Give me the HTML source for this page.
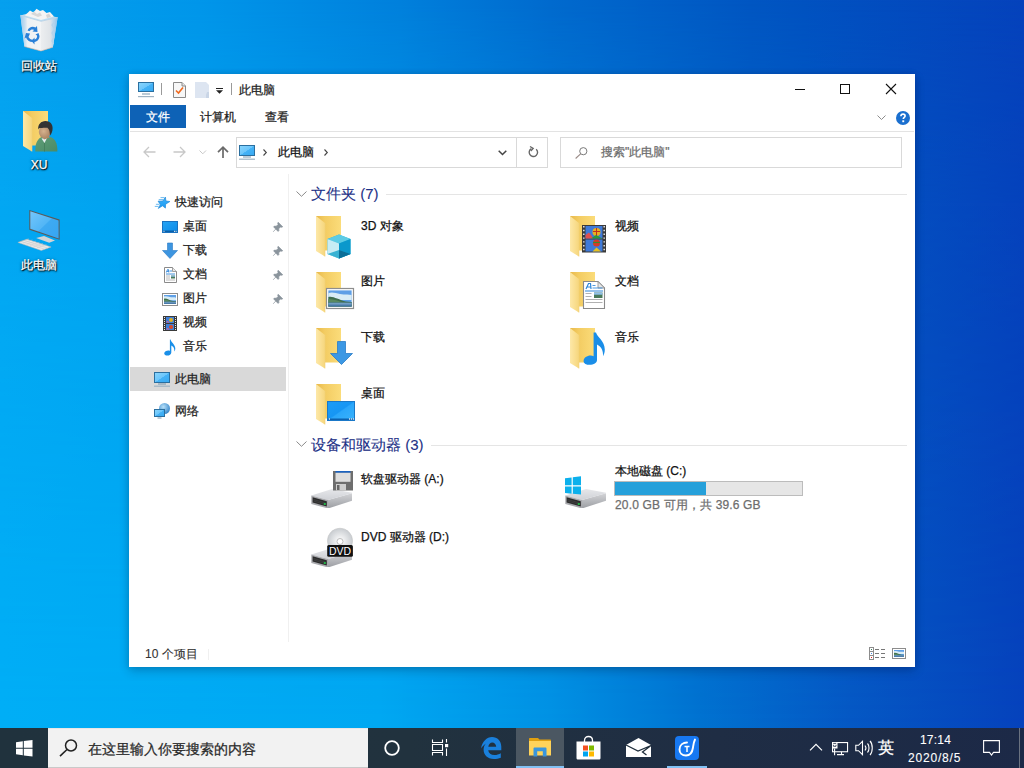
<!DOCTYPE html>
<html><head><meta charset="utf-8">
<style>
*{box-sizing:border-box;margin:0;padding:0}
html,body{width:1024px;height:768px;overflow:hidden}
body{position:relative;font-family:"Liberation Sans",sans-serif;font-size:12px;line-height:16px;color:#000;
background:linear-gradient(90deg,#06a0ee 0px,#0096ea 200px,#0080dc 400px,#006ace 550px,#0056c2 750px,#0542bc 1024px);}
.a{position:absolute}
.t{position:absolute;white-space:nowrap;font-size:12px;line-height:16px;margin-top:-1px;-webkit-text-stroke:0.25px currentColor}
svg{position:absolute;overflow:visible}
#bgl{position:absolute;left:0;top:0;width:1024px;height:728px;
background:linear-gradient(90deg,#00aef6 0px,#00a8f2 380px,#0092e4 550px,#0072d0 700px,#0458c4 850px,#0542bc 1024px);
-webkit-mask-image:linear-gradient(to bottom,transparent 0%,rgba(0,0,0,.5) 28%,#000 100%);mask-image:linear-gradient(to bottom,transparent 0%,rgba(0,0,0,.5) 28%,#000 100%)}
.dt{position:absolute;color:#fff;text-align:center;width:76px;-webkit-text-stroke:0.25px #fff;text-shadow:1px 1px 1px #000,0 1px 2px rgba(0,0,0,.8),0 0 3px rgba(0,0,0,.5)}
#win{position:absolute;left:129px;top:74px;width:786px;height:593px;background:#fff;
box-shadow:0 0 6px rgba(0,0,30,.12),0 4px 10px rgba(0,0,30,.2);}
#tb{position:absolute;left:0;top:728px;width:1024px;height:40px;
background:linear-gradient(90deg,#20323d 0%,#21323e 40%,#1f2d44 70%,#1c2947 100%)}
</style></head><body>
<div id="bgl"></div>

<!-- desktop icons -->

<!-- recycle bin -->
<svg style="left:16px;top:6px" width="46" height="48" viewBox="0 0 46 48">
 <defs>
  <linearGradient id="binL" x1="0" y1="0" x2="1" y2="0"><stop offset="0" stop-color="#9ccbee"/><stop offset="0.22" stop-color="#c8def0"/><stop offset="0.35" stop-color="#eef1f4"/><stop offset="1" stop-color="#f3f4f5"/></linearGradient>
  <linearGradient id="binR" x1="0" y1="0" x2="1" y2="0"><stop offset="0" stop-color="#eceef0"/><stop offset="0.55" stop-color="#e0e4e8"/><stop offset="0.75" stop-color="#b8d6ee"/><stop offset="1" stop-color="#8cc4ee"/></linearGradient>
 </defs>
 <path d="M4.4 9.4L18.8 5.6L41.6 11.5L36.9 41.25L25 45L8.4 40.6Z" fill="#cfe3f2" opacity="0.9"/>
 <path d="M4.4 9.4L25 15.3V45L8.4 40.6Z" fill="url(#binL)"/>
 <path d="M25 15.3L41.6 11.5L36.9 41.25L25 45Z" fill="url(#binR)"/>
 <path d="M9 9.5L14 4.5L17.5 6.5L20.5 2.8L24 5L27 4L30.5 7L34 6L38 10.5L25 14Z" fill="#f4f4f4"/>
 <path d="M15 8L18 5.5L21 8L24 6.5L26 9.5L22 11Z" fill="#d8d8d8"/>
 <path d="M30 9L33 7.5L35 11L31 12Z" fill="#d4d4d4"/>
 <path d="M4.4 9.4L25 15.3L41.6 11.5" fill="none" stroke="#bcd4e6" stroke-width="0.9"/>
 <path d="M38.5 16L36 19L38.5 23L36 27L38 31L36 35L37.5 38" fill="none" stroke="#b4d2ea" stroke-width="1.2"/>
 <path d="M11.5 24.5C13 21 16.5 20 19.5 21.5L21 20L21.5 26L16.5 25.5L18 24C16.5 23.2 14.5 23.6 13.5 25.2Z" fill="#2a80d8"/>
 <path d="M10 27L14 27.5L12.5 31C13.5 33 15.5 34 17.5 33.5V36C14 36.5 11 34.5 10 31.5L8.5 32.5Z" fill="#2a80d8"/>
 <path d="M19.5 28.5L22.5 27L23.5 30C23.5 33 21.5 35.5 18.5 36V38.5L15.5 35L18.5 31.5V33.5C20.5 33 21.5 31 21 29.5Z" fill="#2a80d8"/>
 <path d="M8.4 40.6L25 45L36.9 41.25" fill="none" stroke="#c8a898" stroke-width="0.8" opacity="0.7"/>
</svg>

<!-- XU user folder -->
<svg style="left:19px;top:107px" width="48" height="48"><use href="#folder"/></svg>
<svg style="left:34px;top:120px" width="25" height="34" viewBox="0 0 25 34">
 <defs><radialGradient id="face" cx="0.4" cy="0.45" r="0.65"><stop offset="0" stop-color="#d6b28e"/><stop offset="1" stop-color="#a88060"/></radialGradient>
 <linearGradient id="shirt" x1="0" y1="0" x2="1" y2="1"><stop offset="0" stop-color="#5f9e78"/><stop offset="1" stop-color="#4a8a66"/></linearGradient></defs>
 <path d="M1.3 31.6C1 25 2.5 20 7 17.3L10 16.5L16.5 17C21 18.5 23.6 23 23.4 31.6Z" fill="url(#shirt)"/>
 <path d="M7.5 18.5L10.5 23L13 18Z" fill="#e6eef0"/>
 <path d="M10.5 23V31.6" stroke="#3f7858" stroke-width="0.7"/>
 <path d="M8 16L10 19.5L15.5 17.5L14.5 14Z" fill="#b08868"/>
 <ellipse cx="10.8" cy="11.8" rx="6" ry="6.6" fill="url(#face)"/>
 <path d="M4.2 9.5C3.8 4.5 7 1 11.5 1C16 1 18.8 4 18.6 8.5C18.5 11.5 17.5 14 16 15.5C15.8 12.5 15.5 9.5 13.5 7.8C11.5 7.5 7 7.8 5 8.2C4.6 8.7 4.4 9.1 4.2 9.5Z" fill="#333"/>
</svg>

<!-- This PC -->
<svg style="left:14px;top:204px" width="50" height="50" viewBox="0 0 50 50">
 <defs><linearGradient id="pcs" x1="0" y1="0" x2="1" y2="1"><stop offset="0" stop-color="#74c6fb"/><stop offset="0.5" stop-color="#52b6f6"/><stop offset="0.52" stop-color="#3eaaf2"/><stop offset="1" stop-color="#36a6f2"/></linearGradient></defs>
 <path d="M22.1 33.9L30 31.9L41 36.5L35.2 38.7Z" fill="#d2d4d6"/>
 <path d="M15.3 5.9L45.6 15.6V35.8L15.3 25.7Z" fill="#5a5a5a"/>
 <path d="M16.3 7.3L44.6 16.4V34.4L16.3 24.8Z" fill="url(#pcs)"/>
 <path d="M3.9 38.4L13 35.2L37.1 43L27.3 46.5Z" fill="#e8e8e8" stroke="#b4b4b4" stroke-width="0.5"/>
 <path d="M7 37.5L30.5 45.2M10 36.4L33.5 44M5.5 38L15 34.8M9 39.1L18.5 35.9M12.5 40.3L22 37M16 41.4L25.5 38.2M19.5 42.6L29 39.4M23 43.7L32.5 40.5" stroke="#c4c4c4" stroke-width="0.45"/>
</svg>
<div class="dt" style="left:1px;top:58px">回收站</div>
<div class="dt" style="left:1px;top:157px">XU</div>
<div class="dt" style="left:1px;top:257px">此电脑</div>

<!-- window -->
<div id="win">

<!-- title bar -->
<svg style="left:9px;top:8px" width="16" height="17" viewBox="0 0 16 17">
 <defs><linearGradient id="scr" x1="0" y1="0" x2="1" y2="1"><stop offset="0" stop-color="#8ad6fd"/><stop offset="0.5" stop-color="#6cc6fb"/><stop offset="0.52" stop-color="#44b2f6"/><stop offset="1" stop-color="#38aaf2"/></linearGradient></defs>
 <rect x="0.5" y="0.5" width="15" height="9" fill="url(#scr)" stroke="#2b6f9f"/>
 <rect x="4" y="11.5" width="8" height="1" fill="#7a98ad"/>
 <rect x="0" y="14" width="16" height="1.2" fill="#9fb3c3"/>
</svg>
<div class="a" style="left:32px;top:9px;width:1px;height:12px;background:#9a9a9a"></div>
<svg style="left:44px;top:8px" width="13" height="16" viewBox="0 0 13 16">
 <path d="M0.5 0.5H9L12.5 4V15.5H0.5Z" fill="#f7f7f7" stroke="#8a8a8a"/>
 <path d="M9 0.5V4H12.5" fill="#e8e8e8" stroke="#8a8a8a"/>
 <path d="M3 8.5L5.5 11L10 5.5" fill="none" stroke="#f0691e" stroke-width="1.6"/>
</svg>
<svg style="left:66px;top:8px" width="14" height="16" viewBox="0 0 14 16">
 <path d="M0 0H11L14 3V16H0Z" fill="#dde5f1"/>
 <path d="M12 10H14V16H11V13" fill="#c9d5e6"/>
</svg>
<svg style="left:87px;top:14px" width="7" height="6" viewBox="0 0 7 6">
 <rect x="0" y="0" width="7" height="1" fill="#222"/>
 <path d="M0 2.2H7L3.5 5.8Z" fill="#222"/>
</svg>
<div class="a" style="left:102px;top:9px;width:1px;height:12px;background:#9a9a9a"></div>
<div class="t" style="left:110px;top:9px;color:#222">此电脑</div>
<div class="a" style="left:666px;top:15px;width:10px;height:1px;background:#111"></div>
<div class="a" style="left:711px;top:10px;width:10px;height:10px;border:1px solid #111"></div>
<svg style="left:757px;top:10px" width="10" height="10" viewBox="0 0 10 10"><path d="M0 0L10 10M10 0L0 10" stroke="#111" stroke-width="1.1"/></svg>

<!-- ribbon -->
<div class="a" style="left:1px;top:31px;width:56px;height:23px;background:#0e62b6"></div>
<div class="t" style="left:17px;top:36px;color:#fff">文件</div>
<div class="t" style="left:71px;top:36px;color:#222">计算机</div>
<div class="t" style="left:136px;top:36px;color:#222">查看</div>
<div class="a" style="left:1px;top:57px;width:784px;height:1px;background:#e3e3e3"></div>
<svg style="left:748px;top:41px" width="9" height="6" viewBox="0 0 9 6"><path d="M0.5 0.5L4.5 4.5L8.5 0.5" fill="none" stroke="#8c8c8c" stroke-width="1"/></svg>
<svg style="left:767px;top:37px" width="14" height="14" viewBox="0 0 14 14">
 <circle cx="7" cy="7" r="7" fill="#1a6fcf"/>
 <path d="M4.9 5.2C4.9 3.9 5.8 3.1 7 3.1C8.3 3.1 9.1 3.9 9.1 5C9.1 6.4 7.3 6.5 7.3 8.1" fill="none" stroke="#fff" stroke-width="1.6"/>
 <rect x="6.3" y="9.3" width="1.9" height="1.9" fill="#fff"/>
</svg>

<!-- nav buttons -->
<svg style="left:14px;top:72px" width="13" height="12" viewBox="0 0 13 12"><path d="M12.5 6H1M6 1L1 6L6 11" fill="none" stroke="#c8c8c8" stroke-width="1.3"/></svg>
<svg style="left:44px;top:72px" width="13" height="12" viewBox="0 0 13 12"><path d="M0.5 6H12M7 1L12 6L7 11" fill="none" stroke="#c8c8c8" stroke-width="1.3"/></svg>
<svg style="left:70px;top:76px" width="8" height="5" viewBox="0 0 8 5"><path d="M0.5 0.5L3.8 3.8L7 0.5" fill="none" stroke="#c8c8c8" stroke-width="1"/></svg>
<svg style="left:88px;top:72px" width="12" height="12" viewBox="0 0 12 12"><path d="M6 12V1.2M1 6.2L6 1.2L11 6.2" fill="none" stroke="#6a6a6a" stroke-width="1.7"/></svg>

<!-- address box -->
<div class="a" style="left:107px;top:63px;width:312px;height:31px;border:1px solid #d9d9d9"></div>
<div class="a" style="left:387px;top:63px;width:1px;height:31px;background:#d9d9d9"></div>
<svg style="left:110px;top:71px" width="16" height="15" viewBox="0 0 16 15">
 <rect x="0.5" y="0.5" width="15" height="10" fill="url(#scr)" stroke="#2b6f9f"/>
 <rect x="4" y="11.5" width="8" height="1" fill="#7a98ad"/>
 <rect x="0" y="13.6" width="16" height="1.2" fill="#9fb3c3"/>
</svg>
<svg style="left:134px;top:75px" width="4" height="7" viewBox="0 0 4 7"><path d="M0.5 0.5L3.3 3.5L0.5 6.5" fill="none" stroke="#444" stroke-width="1.1"/></svg>
<div class="t" style="left:149px;top:71px;color:#111">此电脑</div>
<svg style="left:195px;top:75px" width="4" height="7" viewBox="0 0 4 7"><path d="M0.5 0.5L3.3 3.5L0.5 6.5" fill="none" stroke="#444" stroke-width="1.1"/></svg>
<svg style="left:369px;top:76px" width="9" height="6" viewBox="0 0 9 6"><path d="M0.7 0.7L4.5 4.5L8.3 0.7" fill="none" stroke="#444" stroke-width="1.5"/></svg>
<svg style="left:399px;top:72px" width="11" height="12" viewBox="0 0 11 12"><path d="M8.2 3.2A4.2 4.2 0 1 1 3.4 2.6" fill="none" stroke="#666" stroke-width="1.4"/><path d="M2 0.5L5.2 2.4L2.8 5" fill="none" stroke="#666" stroke-width="1.3"/></svg>

<!-- search box -->
<div class="a" style="left:431px;top:63px;width:342px;height:31px;border:1px solid #d9d9d9"></div>
<svg style="left:446px;top:73px" width="13" height="12" viewBox="0 0 13 12"><circle cx="8.3" cy="4.2" r="3.6" fill="none" stroke="#7a7a7a" stroke-width="1"/><path d="M5.6 6.8L0.6 11.5" stroke="#9a8a86" stroke-width="1.1"/></svg>
<div class="t" style="left:472px;top:71px;color:#6d6d6d">搜索"此电脑"</div>

<!-- nav pane -->

<svg style="left:26px;top:123px" width="16" height="12" viewBox="0 0 16 12">
 <defs><linearGradient id="star" x1="0" y1="0" x2="0" y2="1"><stop offset="0" stop-color="#3fb2fa"/><stop offset="1" stop-color="#1a9af2"/></linearGradient></defs>
 <path d="M10.4 0.1L10.9 4L14.9 4.5L10.6 7.2L10.4 11.1L7.5 8.8L3.3 11.4L5.4 7.5L3.1 4.2L7.8 4Z" fill="url(#star)" stroke="#1f88d8" stroke-width="0.7" stroke-linejoin="round"/>
 <path d="M5.9 0.6H9M4.1 2.6H7.6M1.3 7.3H4.3M0.2 9.4H3.2" stroke="#5eb4ee" stroke-width="0.9" stroke-linecap="round"/>
</svg>
<div class="t" style="left:46px;top:121px;color:#222">快速访问</div>

<svg style="left:33px;top:147px" width="16" height="12" viewBox="0 0 16 12">
 <defs><linearGradient id="dsk" x1="0" y1="0" x2="1" y2="1"><stop offset="0" stop-color="#26a4f4"/><stop offset="1" stop-color="#0a8ae8"/></linearGradient></defs>
 <rect x="0.5" y="0.5" width="15" height="11" fill="url(#dsk)" stroke="#1a72c0"/>
 <rect x="1" y="9.5" width="14" height="1.5" fill="#0a5fa8"/>
 <rect x="1.5" y="9.8" width="1" height="1" fill="#fff"/><rect x="12" y="9.8" width="1" height="1" fill="#fff"/><rect x="13.6" y="9.8" width="1" height="1" fill="#fff"/>
</svg>
<div class="t" style="left:54px;top:145px;color:#222">桌面</div>

<svg style="left:33px;top:169px" width="16" height="16" viewBox="0 0 16 16">
 <path d="M5.5 0H10.5V7.5H15.5L8 15.5L0.5 7.5H5.5Z" fill="#3d95e0" stroke="#2a78c4" stroke-width="0.6"/>
</svg>
<div class="t" style="left:54px;top:169px;color:#222">下载</div>

<svg style="left:35px;top:193px" width="13" height="16" viewBox="0 0 13 16">
 <path d="M0.5 0.5H8.5L12.5 4.5V15.5H0.5Z" fill="#fff" stroke="#8a8a8a"/>
 <path d="M8.5 0.5V4.5H12.5" fill="#e8e8e8" stroke="#8a8a8a" stroke-width="0.8"/>
 <path d="M2.3 5.5L3.6 2.5H4.4L4.8 5.5M2.8 4.4H4.7" fill="none" stroke="#2f86d8" stroke-width="0.9"/>
 <path d="M5.5 4H8M2 7H11" stroke="#2f86d8" stroke-width="0.9"/>
 <path d="M2 9H6M2 11H6M2 13H11" stroke="#a8a8a8" stroke-width="0.8"/>
 <rect x="7" y="8.5" width="4" height="3" fill="#4a7a5a"/><rect x="7" y="8.5" width="4" height="1.2" fill="#8fc0e8"/>
</svg>
<div class="t" style="left:54px;top:193px;color:#222">文档</div>

<svg style="left:33px;top:219px" width="16" height="13" viewBox="0 0 16 13">
 <rect x="0.5" y="0.5" width="15" height="12" fill="#fff" stroke="#8c8c8c"/>
 <use href="#land" x="2" y="2" width="12" height="9"/>
</svg>
<div class="t" style="left:54px;top:217px;color:#222">图片</div>

<svg style="left:34px;top:242px" width="14" height="15" viewBox="0 0 14 15">
 <rect x="0" y="0" width="14" height="15" fill="#3a3a3a"/>
 <rect x="3" y="1" width="8" height="6" fill="#3f7fd8"/>
 <rect x="3" y="8" width="8" height="6" fill="#3f7fd8"/>
 <circle cx="8" cy="4" r="2" fill="#e0b020"/><circle cx="8" cy="11" r="2" fill="#d84828"/>
 <path d="M3 6L5 5L6 7Z M3 13L5 12L6 14Z" fill="#e85a8a"/>
 <path d="M1.5 1V14M12.5 1V14" stroke="#e8e8e8" stroke-width="1" stroke-dasharray="1 1"/>
</svg>
<div class="t" style="left:54px;top:241px;color:#222">视频</div>

<svg style="left:35px;top:265px" width="12" height="17" viewBox="0 0 12 17">
 <path d="M6.6 0.5C6.8 3 11.5 5.5 11.3 9.8C11.2 11.3 10.7 12 10.2 12.6C10.8 10 9.5 7.3 7.3 6.5V13.5C7.3 15.4 5.3 16.6 3.4 16.6C1.6 16.6 0.2 15.8 0.2 14.5C0.2 12.8 2.5 11.6 4.4 11.6C5 11.6 5.5 11.7 5.9 11.9V0.5Z" fill="#1a8fe8"/>
</svg>
<div class="t" style="left:54px;top:265px;color:#222">音乐</div>

<svg style="left:144px;top:148px" width="10" height="10" viewBox="0 0 10 10" class="pin"><path d="M5.2 0.3L9.7 4.8L8.8 5.3L7.6 4.9L5.7 6.8L5.9 8.6L5.1 9.4L0.6 4.9L1.4 4.1L3.2 4.3L5.1 2.4L4.7 1.2Z M2.9 6.9L0.2 9.8" fill="#8a949c" stroke="#8a949c" stroke-width="0.7"/></svg>
<svg style="left:144px;top:172px" width="10" height="10" viewBox="0 0 10 10"><path d="M5.2 0.3L9.7 4.8L8.8 5.3L7.6 4.9L5.7 6.8L5.9 8.6L5.1 9.4L0.6 4.9L1.4 4.1L3.2 4.3L5.1 2.4L4.7 1.2Z M2.9 6.9L0.2 9.8" fill="#8a949c" stroke="#8a949c" stroke-width="0.7"/></svg>
<svg style="left:144px;top:196px" width="10" height="10" viewBox="0 0 10 10"><path d="M5.2 0.3L9.7 4.8L8.8 5.3L7.6 4.9L5.7 6.8L5.9 8.6L5.1 9.4L0.6 4.9L1.4 4.1L3.2 4.3L5.1 2.4L4.7 1.2Z M2.9 6.9L0.2 9.8" fill="#8a949c" stroke="#8a949c" stroke-width="0.7"/></svg>
<svg style="left:144px;top:220px" width="10" height="10" viewBox="0 0 10 10"><path d="M5.2 0.3L9.7 4.8L8.8 5.3L7.6 4.9L5.7 6.8L5.9 8.6L5.1 9.4L0.6 4.9L1.4 4.1L3.2 4.3L5.1 2.4L4.7 1.2Z M2.9 6.9L0.2 9.8" fill="#8a949c" stroke="#8a949c" stroke-width="0.7"/></svg>

<div class="a" style="left:1px;top:293px;width:156px;height:24px;background:#d9d9d9"></div>
<svg style="left:25px;top:298px" width="16" height="15" viewBox="0 0 16 15">
 <rect x="0.5" y="0.5" width="15" height="10" fill="url(#scr)" stroke="#2b6f9f"/>
 <rect x="4" y="11.5" width="8" height="1" fill="#7a98ad"/>
 <rect x="0" y="13.6" width="16" height="1.2" fill="#9fb3c3"/>
</svg>
<div class="t" style="left:46px;top:298px;color:#222">此电脑</div>

<svg style="left:25px;top:329px" width="16" height="16" viewBox="0 0 16 16">
 <defs><radialGradient id="glb" cx="0.4" cy="0.35" r="0.7"><stop offset="0" stop-color="#b8e0f8"/><stop offset="1" stop-color="#2f82c8"/></radialGradient></defs>
 <circle cx="10.5" cy="5.5" r="5.5" fill="url(#glb)"/>
 <rect x="0.5" y="6.5" width="10" height="7" fill="url(#scr)" stroke="#2b6f9f"/>
 <rect x="3.5" y="14.5" width="4" height="1" fill="#7a98ad"/>
</svg>
<div class="t" style="left:46px;top:330px;color:#222">网络</div>
<div class="a" style="left:159px;top:100px;width:1px;height:468px;background:#f0f0f0"></div>

<svg width="0" height="0" style="position:absolute">
 <defs>
  <linearGradient id="fback" x1="0" y1="0" x2="1" y2="0"><stop offset="0" stop-color="#e8b84a"/><stop offset="0.35" stop-color="#f3cc62"/><stop offset="1" stop-color="#fbdc7a"/></linearGradient>
  <linearGradient id="fflap" x1="0" y1="0" x2="1" y2="0"><stop offset="0" stop-color="#fde8a8"/><stop offset="1" stop-color="#f6d67c"/></linearGradient>
<symbol id="land" viewBox="0 0 24 17" preserveAspectRatio="none">
   <rect width="24" height="17" fill="#5e9fe6"/>
   <path d="M0 3C4 1.5 8 3 12 4S20 3.5 24 5V10H0Z" fill="#d8ecf6"/>
   <path d="M0 7C3 6 6 7.5 9 8.5S15 11 18 11.5L24 12V17H0Z" fill="#3f6e4e"/>
   <path d="M0 9C4 9 8 10 12 11.5S20 12.5 24 12.5V17H0Z" fill="#5a8a60"/>
   <path d="M0 12.5H24V17H0Z" fill="#4a7aa8"/>
   <path d="M0 14H24" stroke="#8ab4d4" stroke-width="1"/>
  </symbol>
  <symbol id="folder" viewBox="0 0 48 48">
   <path d="M4 4H29V38.5H13V44H12Z" fill="url(#fback)"/>
   <path d="M4 4L13 11V44.5L4 39Z" fill="url(#fflap)"/>
   <path d="M13 11V44.5" stroke="#f1d07a" stroke-width="0.6"/>
  </symbol>
  <linearGradient id="drvtop" x1="0" y1="0" x2="0" y2="1"><stop offset="0" stop-color="#e6e7ea"/><stop offset="1" stop-color="#cfd1d6"/></linearGradient>
  <linearGradient id="drvside" x1="0" y1="0" x2="0" y2="1"><stop offset="0" stop-color="#d4d5d8"/><stop offset="1" stop-color="#9c9ea3"/></linearGradient>
  <symbol id="drive" viewBox="0 0 48 48">
   <path d="M24 40L49 33V40.5L24 48.5Z" fill="url(#drvside)"/>
   <path d="M7.3 35.4L28 29L49 33L24 40Z" fill="url(#drvtop)"/>
   <path d="M7.3 35.4L24 40V48.5L7.3 44Z" fill="#a8a9ad"/>
   <path d="M8.6 37.3L22.8 41.3V46.6L8.6 42.6Z" fill="#2c2c2c"/>
   <path d="M9.5 39.5L21.5 43M9.5 41L21.5 44.5" stroke="#4a4a4a" stroke-width="0.6"/>
   <rect x="19.8" y="43.2" width="2" height="1.6" fill="#1ed24a"/>
  </symbol>
 </defs>
</svg>

<!-- group 1 header -->
<svg style="left:167px;top:117px" width="11" height="6" viewBox="0 0 11 6"><path d="M0.5 0.5L5.5 5.3L10.5 0.5" fill="none" stroke="#8a8a8a" stroke-width="1"/></svg>
<div class="t" style="left:182px;top:111px;font-size:15px;line-height:20px;color:#1e3287;-webkit-text-stroke:0.1px #1e3287">文件夹 (7)</div>
<div class="a" style="left:257px;top:120px;width:521px;height:1px;background:#e5e5e5"></div>

<!-- folder items col1 -->
<svg style="left:183px;top:138px" width="48" height="48"><use href="#folder"/>
 <path d="M27 22.5L38.5 27V42L27 46.5L15.5 42V27Z" fill="#28b6d8"/>
 <path d="M15.5 27L27 22.5L38.5 27L27 31.5Z" fill="#5ccbe4"/>
 <path d="M15.5 27L27 31.5V46.5L15.5 42Z" fill="#c8ecf4"/>
 <path d="M27 31.5L38.5 27V42L27 46.5Z" fill="#0a98cc"/>
 <path d="M15.5 42L27 38L38.5 42L27 46.5Z" fill="#1fa8cc" opacity="0.85"/>
 <path d="M27 38L38.5 42L27 46.5Z" fill="#0b6e98"/>
</svg>
<div class="t" style="left:232px;top:145px;color:#111">3D 对象</div>

<svg style="left:183px;top:194px" width="48" height="48"><use href="#folder"/>
 <rect x="14.5" y="20.5" width="27" height="20" fill="#fff" stroke="#8e8e8e" stroke-width="1.2"/>
 <defs><linearGradient id="lpic" x1="0" y1="0" x2="0" y2="1"><stop offset="0" stop-color="#5d9cea"/><stop offset="0.3" stop-color="#cfe6f6"/><stop offset="0.55" stop-color="#4e7c58"/><stop offset="0.7" stop-color="#3a6890"/><stop offset="1" stop-color="#8eb4d0"/></linearGradient></defs>
 <use href="#land" x="16.2" y="22.2" width="23.6" height="16.6"/>
</svg>
<div class="t" style="left:232px;top:200px;color:#111">图片</div>

<svg style="left:183px;top:250px" width="48" height="48"><use href="#folder"/>
 <path d="M25.5 17.5H33.5V29.5H40.5L29.5 40.5L18.5 29.5H25.5Z" fill="#3c98e4" stroke="#2a7cc8" stroke-width="0.8"/>
</svg>
<div class="t" style="left:232px;top:256px;color:#111">下载</div>

<svg style="left:183px;top:306px" width="48" height="48"><use href="#folder"/>
 <defs><linearGradient id="ldsk" x1="0" y1="0" x2="1" y2="1"><stop offset="0" stop-color="#1c9cf6"/><stop offset="0.48" stop-color="#1696f4"/><stop offset="0.52" stop-color="#2aa6fa"/><stop offset="1" stop-color="#3ab4fc"/></linearGradient></defs>
 <rect x="15.5" y="21.5" width="27" height="19" fill="url(#ldsk)" stroke="#1a78c8"/>
 <rect x="16" y="38.5" width="26" height="1.5" fill="#0d62b0"/>
 <rect x="16.8" y="38.4" width="1.2" height="1.2" fill="#fff"/><rect x="37" y="38.4" width="1.2" height="1.2" fill="#fff"/><rect x="39" y="38.4" width="1.2" height="1.2" fill="#fff"/><rect x="41" y="38.4" width="1" height="1.2" fill="#fff"/>
</svg>
<div class="t" style="left:232px;top:312px;color:#111">桌面</div>

<!-- col2 -->
<svg style="left:437px;top:138px" width="48" height="48"><use href="#folder"/>
 <rect x="16" y="13" width="24" height="27.5" fill="#3a3a3a"/>
 <rect x="19.5" y="14" width="17" height="12.5" fill="#3f7ad8"/>
 <rect x="19.5" y="27.5" width="17" height="12" fill="#3f7ad8"/>
 <circle cx="30.5" cy="20" r="4" fill="#e8b020"/><path d="M27 19.5H34M30.5 16V24" stroke="#c03020" stroke-width="1"/>
 <path d="M19.5 23L23 20.5L26 24.5L27 26.5H19.5Z" fill="#e05050"/><path d="M25 26.5L30 23L36.5 26.5Z" fill="#2a9a3a"/>
 <circle cx="30.5" cy="31" r="3.5" fill="#d83a28"/><path d="M27 30.5H34" stroke="#3a8a30" stroke-width="1.2"/>
 <path d="M26.5 39.5L30.5 35.5L35 39.5Z" fill="#e8c020"/>
 <path d="M17.8 14V40M38.2 14V40" stroke="#f0f0f0" stroke-width="1.4" stroke-dasharray="1.4 2.4"/>
</svg>
<div class="t" style="left:486px;top:145px;color:#111">视频</div>

<svg style="left:437px;top:194px" width="48" height="48"><use href="#folder"/>
 <path d="M17.5 13.5H32L38.5 20V40.5H17.5Z" fill="#fff" stroke="#8a8a8a" stroke-width="1.1"/>
 <path d="M32 13.5V20H38.5Z" fill="#e6e6e6" stroke="#8a8a8a" stroke-width="0.8"/>
 <path d="M20 21L22.5 15.5H24.5L25 21M21 19H24.5" fill="none" stroke="#2f86d8" stroke-width="1.2"/>
 <path d="M26.5 17.5H29.5M26.5 20H36.5" stroke="#3b8fdc" stroke-width="0.9"/>
 <rect x="19" y="22.5" width="18" height="1" fill="#2f86d8"/>
 <path d="M19.5 25.5H25.5M19.5 28.5H25.5M19.5 31.5H36.5M19.5 34.5H36.5" stroke="#a8a8a8" stroke-width="0.9"/>
 <rect x="28" y="24.5" width="8.5" height="5.5" fill="#4a7a5a"/><rect x="28" y="24.5" width="8.5" height="2.2" fill="#8fc0e8"/>
</svg>
<div class="t" style="left:486px;top:200px;color:#111">文档</div>

<svg style="left:437px;top:250px" width="48" height="48"><use href="#folder"/>
 <path d="M23.5 40.8C20.2 40.8 17.6 39.4 17.6 36.9C17.6 34 21 31.6 24.6 31.6C25.8 31.6 26.7 31.8 27.6 32.2V8.5H30C30.8 12.5 38.8 17 38.8 25.5C38.8 28.7 37.8 31 37 32.2C37.5 27.5 35.5 22.5 31 20.5V36C31 39 27.8 40.8 23.5 40.8Z" fill="#1a8ee8"/>
</svg>
<div class="t" style="left:486px;top:256px;color:#111">音乐</div>

<!-- group 2 header -->
<svg style="left:167px;top:367px" width="11" height="6" viewBox="0 0 11 6"><path d="M0.5 0.5L5.5 5.3L10.5 0.5" fill="none" stroke="#8a8a8a" stroke-width="1"/></svg>
<div class="t" style="left:182px;top:362px;font-size:15px;line-height:20px;color:#1e3287;-webkit-text-stroke:0.1px #1e3287">设备和驱动器 (3)</div>
<div class="a" style="left:302px;top:371px;width:476px;height:1px;background:#e5e5e5"></div>

<svg style="left:175px;top:386px" width="56" height="50" viewBox="0 0 56 50"><use href="#drive" x="0" y="0" width="48" height="48"/>
 <rect x="29" y="11" width="20" height="19.5" fill="#6e6e6e"/>
 <rect x="31.5" y="11" width="15" height="1.8" fill="#1a62c0"/>
 <rect x="31.5" y="12.8" width="15" height="9" fill="#dedede"/>
 <rect x="32" y="24" width="10" height="6.5" fill="#cfcfcf"/><rect x="33" y="25" width="2.5" height="5" fill="#666"/>
</svg>
<div class="t" style="left:232px;top:398px;color:#111">软盘驱动器 (A:)</div>

<svg style="left:175px;top:445px" width="56" height="50" viewBox="0 0 56 50"><use href="#drive" x="0" y="0" width="48" height="48"/>
 <defs><radialGradient id="cd" cx="0.5" cy="0.5" r="0.5"><stop offset="0" stop-color="#fff"/><stop offset="1" stop-color="#c8ccd0"/></radialGradient></defs>
 <circle cx="36" cy="21.8" r="12.6" fill="url(#cd)" stroke="#c0c0c0" stroke-width="0.5"/>
 <circle cx="36" cy="22.5" r="3" fill="#fff" stroke="#bbb" stroke-width="1"/>
 <rect x="23.2" y="26" width="25.7" height="11.7" rx="1.5" fill="#111"/>
 <text x="36" y="35.8" font-family="Liberation Sans" font-size="10.5" fill="#fff" text-anchor="middle" textLength="22" lengthAdjust="spacingAndGlyphs">DVD</text>
</svg>
<div class="t" style="left:232px;top:456px;color:#111">DVD 驱动器 (D:)</div>

<svg style="left:429px;top:386px" width="56" height="50" viewBox="0 0 56 50"><use href="#drive" x="0" y="0" width="48" height="48"/>
 <path d="M7 18.3L13.6 17.5V25.3H7Z M14.8 17.3L23 16.2V25.3H14.8Z M7 26.5H13.6V33.8L7 33Z M14.8 26.5H23V34.6L14.8 33.7Z" fill="#0cb0ec"/>
</svg>
<div class="t" style="left:486px;top:390px;color:#111">本地磁盘 (C:)</div>
<div class="a" style="left:485px;top:407px;width:189px;height:15px;background:#e6e6e6;border:1px solid #bcbcbc"></div>
<div class="a" style="left:486px;top:408px;width:91px;height:13px;background:#26a0da"></div>
<div class="t" style="left:486px;top:424px;color:#6d6d6d;letter-spacing:0.15px">20.0 GB 可用，共 39.6 GB</div>

<!-- status bar -->
<div class="t" style="left:16px;top:573px;color:#333;-webkit-text-stroke:0.1px #333">10 个项目</div>
<div class="a" style="left:79px;top:575px;width:1px;height:11px;background:#f0f0f0"></div>
<svg style="left:740px;top:573px" width="17" height="13" viewBox="0 0 17 13">
 <rect x="0.5" y="0.5" width="4" height="12" fill="#fff" stroke="#8c8c8c"/>
 <path d="M0.5 4.5H4.5M0.5 8.5H4.5" stroke="#8c8c8c"/>
 <rect x="2" y="2" width="1" height="1" fill="#3a7a5a"/><rect x="2" y="6" width="1" height="1" fill="#4a8ae8"/><rect x="2" y="10" width="1" height="1" fill="#e02020"/>
 <path d="M6 2.5H10M12 2.5H16M6 6.5H10M12 6.5H16M6 10.5H10M12 10.5H16" stroke="#777" stroke-width="1.1"/>
</svg>
<svg style="left:763px;top:574px" width="14" height="11" viewBox="0 0 14 11">
 <rect x="0.5" y="0.5" width="13" height="10" fill="#fff" stroke="#8c8c8c"/>
 <use href="#land" x="2" y="2" width="10" height="7"/>
</svg>
</div>

<!-- taskbar -->
<div id="tb">

<svg style="left:16px;top:12px" width="17" height="17" viewBox="0 0 17 17">
 <path d="M0 2.3L6.8 1.3V7.8H0Z M7.8 1.1L16.5 0V7.8H7.8Z M0 8.8H6.8V15.3L0 14.3Z M7.8 8.8H16.5V16.5L7.8 15.4Z" fill="#fff"/>
</svg>
<div class="a" style="left:48px;top:0;width:320px;height:40px;background:#f2f2f2;border-top:1px solid #e8e6e6;border-bottom:1px solid #c9c9c9"></div>
<svg style="left:59px;top:11px" width="19" height="18" viewBox="0 0 19 18">
 <circle cx="12" cy="6.5" r="5.5" fill="none" stroke="#222" stroke-width="1.5"/>
 <path d="M8 10.5L1 17.2" stroke="#222" stroke-width="1.6"/>
</svg>
<div class="t" style="left:88px;top:12px;font-size:14px;line-height:20px;color:#2a2a2a">在这里输入你要搜索的内容</div>

<svg style="left:384px;top:12px" width="16" height="16" viewBox="0 0 16 16"><circle cx="8" cy="8" r="6.8" fill="none" stroke="#fff" stroke-width="1.8"/></svg>
<svg style="left:431px;top:11px" width="19" height="17" viewBox="0 0 19 17">
 <path d="M1.5 0.5V3.5H11.5V0.5M1.5 16.5V13.5H11.5V16.5M1.5 5.5H11.5V11.5H1.5Z M15.5 0V3.5M15.5 9.5V17" fill="none" stroke="#fff" stroke-width="1.1"/>
 <rect x="14" y="5" width="3.2" height="3.2" fill="#fff"/>
</svg>
<svg style="left:481px;top:737px;top:9px" width="21" height="22" viewBox="0 0 21 22">
 <path d="M0 11.5C1.2 4.5 5.8 0 11 0C16.5 0 20.3 4 20.3 9.8V13.2H7.2C7.6 16.2 10 18 13.4 18C15.8 18 18 17.3 19.8 16.2V20.8C17.8 21.6 15.4 22 12.8 22C6.3 22 2.6 18 2.6 12.6C2.6 10.2 3.4 8 5 6.4C3.2 7.6 1.2 9.4 0 11.5Z M7.3 9.8H15.2C15 7 13.4 5.4 11.3 5.4C9.2 5.4 7.7 7.2 7.3 9.8Z" fill="#1a80dc"/>
</svg>



<div class="a" style="left:516px;top:0;width:48px;height:40px;background:#4b5762"></div>
<div class="a" style="left:516px;top:38px;width:48px;height:2px;background:#82c1f4"></div>
<svg style="left:529px;top:10px" width="22" height="19" viewBox="0 0 22 19">
 <path d="M0 1C0 0.4 0.4 0 1 0H9L10.5 1.5H21C21.6 1.5 22 1.9 22 2.5V4H0Z" fill="#e0a010"/>
 <path d="M0 3H22V17.5H0Z" fill="#ffd35a"/>
 <path d="M4.5 18.5V10.5C4.5 10 5 9.5 5.5 9.5H16.5C17 9.5 17.5 10 17.5 10.5V18.5H13.8V13.3H8.2V18.5Z" fill="#3a96dc"/>
</svg>
<svg style="left:576px;top:8px" width="25" height="24" viewBox="0 0 25 24">
 <path d="M8.5 6V4.5C8.5 2 10.3 0.5 12.5 0.5C14.7 0.5 16.5 2 16.5 4.5V6" fill="none" stroke="#fff" stroke-width="1.3"/>
 <path d="M0.5 5.5H24.5V22C24.5 23 23.7 23.5 23 23.5H2C1.2 23.5 0.5 23 0.5 22Z" fill="#fff"/>
 <rect x="7" y="9.5" width="5" height="5" fill="#f25022"/><rect x="13" y="9.5" width="5" height="5" fill="#7fba00"/>
 <rect x="7" y="15.5" width="5" height="5" fill="#00a4ef"/><rect x="13" y="15.5" width="5" height="5" fill="#ffb900"/>
</svg>
<svg style="left:626px;top:10px" width="25" height="19" viewBox="0 0 25 19">
 <path d="M0 7L12.5 0L25 7V19H0Z" fill="#fff"/>
 <path d="M0 7L12 13L25 7.5L16.5 14L20.5 17" fill="none" stroke="#1f2e3c" stroke-width="1.3"/>
</svg>
<div class="a" style="left:675px;top:8px;width:24px;height:24px;background:#1778f2;border-radius:4px"></div>
<svg style="left:675px;top:8px" width="24" height="24" viewBox="0 0 24 24">
 <path d="M12 6.5C8.5 6.5 4.5 8.5 4.5 13.5C4.5 17 7 19.5 11 19.5C15.5 19.5 17.5 15 18 11.5C18.3 9 18.5 6.5 20 3.5" fill="none" stroke="#fff" stroke-width="1.9" stroke-linecap="round"/>
 <path d="M9.5 10.5H14.5M12 10.5V16" stroke="#fff" stroke-width="1.5"/>
</svg>
<div class="a" style="left:667px;top:38px;width:40px;height:2px;background:#82c1f4"></div>

<svg style="left:809px;top:15px" width="14" height="8" viewBox="0 0 14 8"><path d="M1 7.3L7 1.3L13 7.3" fill="none" stroke="#fff" stroke-width="1.2"/></svg>
<svg style="left:831px;top:13px" width="18" height="15" viewBox="0 0 18 15">
 <rect x="1.55" y="1.55" width="15" height="9.2" fill="none" stroke="#fff" stroke-width="1.1"/>
 <rect x="1" y="1" width="5.5" height="6.5" fill="#fff"/>
 <path d="M2.2 2.4H5.2M2.4 3.8V5.3H5V3.8" fill="none" stroke="#1d2b45" stroke-width="0.8"/>
 <path d="M3.6 7.5V14.2M10.5 10.8V13.5M6 13.6H13" fill="none" stroke="#fff" stroke-width="1.1"/>
</svg>
<svg style="left:855px;top:12px" width="18" height="16" viewBox="0 0 18 16">
 <path d="M0.8 5.3H3.5L7.5 1.3V14.7L3.5 10.7H0.8Z" fill="none" stroke="#fff" stroke-width="1.1"/>
 <path d="M10 5.5C11 6.8 11 9.2 10 10.5M12.5 3.5C14.5 5.5 14.5 10.5 12.5 12.5M15 1C18 4 18 12 15 15" fill="none" stroke="#fff" stroke-width="1.1"/>
</svg>
<div class="t" style="left:878px;top:10px;font-size:16px;line-height:22px;color:#fff;-webkit-text-stroke:0.3px #fff">英</div>
<div class="t" style="left:920px;top:5px;color:#fff;letter-spacing:0.2px;-webkit-text-stroke:0.1px #fff">17:14</div>
<div class="t" style="left:908px;top:23px;color:#fff;letter-spacing:0.8px;-webkit-text-stroke:0.1px #fff">2020/8/5</div>
<svg style="left:983px;top:12px" width="17" height="17" viewBox="0 0 17 17">
 <path d="M0.6 0.6H16.4V12.4H10.5L8.5 15L6.5 12.4H0.6Z" fill="none" stroke="#fff" stroke-width="1.1"/>
</svg>
<div class="a" style="left:1019px;top:0;width:1px;height:40px;background:#6a7280"></div>
</div>
</body></html>
